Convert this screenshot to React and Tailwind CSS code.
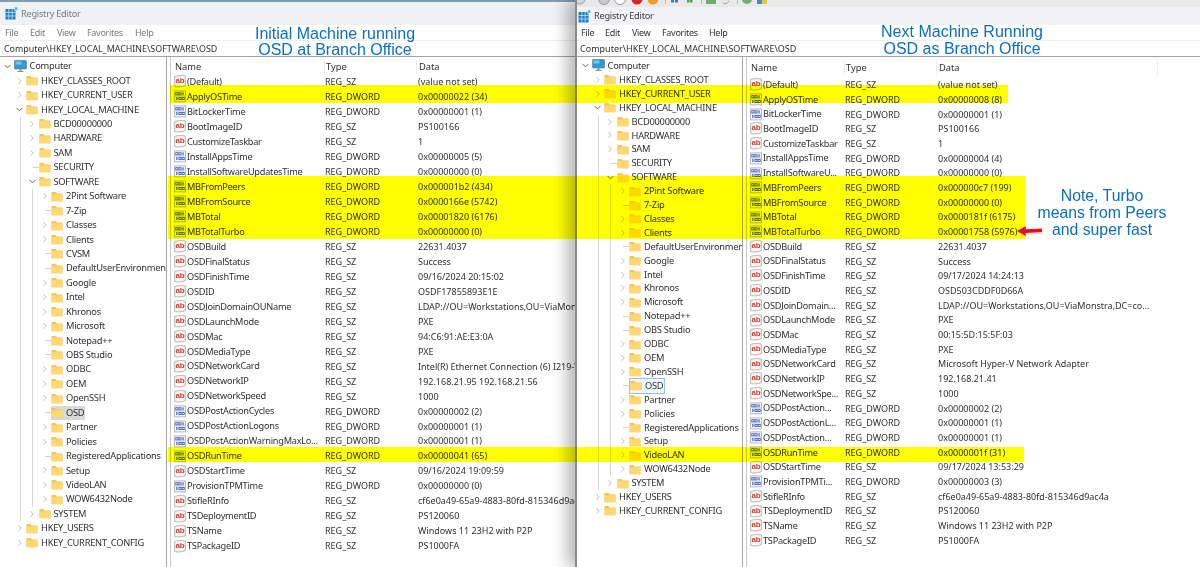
import React from "react";
import { ChevronRight, ChevronDown } from "lucide-react";

const tree = (second) => {
  const soft = [
    ["2Pint Software", 1], ["7-Zip", 0], ["Classes", 1], ["Clients", 1],
    ...(second ? [] : [["CVSM", 0]]),
    ["DefaultUserEnvironment", 0], ["Google", 1], ["Intel", 1], ["Khronos", 1], ["Microsoft", 1],
    ["Notepad++", 0], ["OBS Studio", 0], ["ODBC", 1], ["OEM", 1], ["OpenSSH", 1], ["OSD", 0, "sel"],
    ["Partner", 1], ["Policies", 1], ["RegisteredApplications", 0], ["Setup", 1], ["VideoLAN", 1], ["WOW6432Node", 1],
  ];
  return soft;
};

const left = [
  ["s","(Default)","REG_SZ","(value not set)"],["d","ApplyOSTime","REG_DWORD","0x00000022 (34)"],["d","BitLockerTime","REG_DWORD","0x00000001 (1)"],["s","BootImageID","REG_SZ","PS100166"],["s","CustomizeTaskbar","REG_SZ","1"],["d","InstallAppsTime","REG_DWORD","0x00000005 (5)"],["d","InstallSoftwareUpdatesTime","REG_DWORD","0x00000000 (0)"],["d","MBFromPeers","REG_DWORD","0x000001b2 (434)"],["d","MBFromSource","REG_DWORD","0x0000166e (5742)"],["d","MBTotal","REG_DWORD","0x00001820 (6176)"],["d","MBTotalTurbo","REG_DWORD","0x00000000 (0)"],["s","OSDBuild","REG_SZ","22631.4037"],["s","OSDFinalStatus","REG_SZ","Success"],["s","OSDFinishTime","REG_SZ","09/16/2024 20:15:02"],["s","OSDID","REG_SZ","OSDF17855893E1E"],["s","OSDJoinDomainOUName","REG_SZ","LDAP://OU=Workstations,OU=ViaMonstra,DC=corp"],["s","OSDLaunchMode","REG_SZ","PXE"],["s","OSDMac","REG_SZ","94:C6:91:AE:E3:0A"],["s","OSDMediaType","REG_SZ","PXE"],["s","OSDNetworkCard","REG_SZ","Intel(R) Ethernet Connection (6) I219-V"],["s","OSDNetworkIP","REG_SZ","192.168.21.95 192.168.21.56"],["s","OSDNetworkSpeed","REG_SZ","1000"],["d","OSDPostActionCycles","REG_DWORD","0x00000002 (2)"],["d","OSDPostActionLogons","REG_DWORD","0x00000001 (1)"],["d","OSDPostActionWarningMaxLo...","REG_DWORD","0x00000001 (1)"],["d","OSDRunTime","REG_DWORD","0x00000041 (65)"],["s","OSDStartTime","REG_SZ","09/16/2024 19:09:59"],["d","ProvisionTPMTime","REG_DWORD","0x00000000 (0)"],["s","StifleRInfo","REG_SZ","cf6e0a49-65a9-4883-80fd-815346d9ac4a"],["s","TSDeploymentID","REG_SZ","PS120060"],["s","TSName","REG_SZ","Windows 11 23H2 with P2P"],["s","TSPackageID","REG_SZ","PS1000FA"],
];
const right = [
  ["s","(Default)","REG_SZ","(value not set)"],["d","ApplyOSTime","REG_DWORD","0x00000008 (8)"],["d","BitLockerTime","REG_DWORD","0x00000001 (1)"],["s","BootImageID","REG_SZ","PS100166"],["s","CustomizeTaskbar","REG_SZ","1"],["d","InstallAppsTime","REG_DWORD","0x00000004 (4)"],["d","InstallSoftwareU...","REG_DWORD","0x00000000 (0)"],["d","MBFromPeers","REG_DWORD","0x000000c7 (199)"],["d","MBFromSource","REG_DWORD","0x00000000 (0)"],["d","MBTotal","REG_DWORD","0x0000181f (6175)"],["d","MBTotalTurbo","REG_DWORD","0x00001758 (5976)"],["s","OSDBuild","REG_SZ","22631.4037"],["s","OSDFinalStatus","REG_SZ","Success"],["s","OSDFinishTime","REG_SZ","09/17/2024 14:24:13"],["s","OSDID","REG_SZ","OSD503CDDF0D66A"],["s","OSDJoinDomain...","REG_SZ","LDAP://OU=Workstations,OU=ViaMonstra,DC=co..."],["s","OSDLaunchMode","REG_SZ","PXE"],["s","OSDMac","REG_SZ","00:15:5D:15:5F:03"],["s","OSDMediaType","REG_SZ","PXE"],["s","OSDNetworkCard","REG_SZ","Microsoft Hyper-V Network Adapter"],["s","OSDNetworkIP","REG_SZ","192.168.21.41"],["s","OSDNetworkSpe...","REG_SZ","1000"],["d","OSDPostAction...","REG_DWORD","0x00000002 (2)"],["d","OSDPostActionL...","REG_DWORD","0x00000001 (1)"],["d","OSDPostAction...","REG_DWORD","0x00000001 (1)"],["d","OSDRunTime","REG_DWORD","0x0000001f (31)"],["s","OSDStartTime","REG_SZ","09/17/2024 13:53:29"],["d","ProvisionTPMTi...","REG_DWORD","0x00000003 (3)"],["s","StifleRInfo","REG_SZ","cf6e0a49-65a9-4883-80fd-815346d9ac4a"],["s","TSDeploymentID","REG_SZ","PS120060"],["s","TSName","REG_SZ","Windows 11 23H2 with P2P"],["s","TSPackageID","REG_SZ","PS1000FA"],
];

const Folder = () => (
  <svg width="12" height="11" viewBox="0 0 12 11" className="shrink-0">
    <path d="M0.5 1h4l1.3 1.4h5.7v7.8h-11z" fill="#f6c453" />
    <path d="M0.5 3.2h11v7h-11z" fill="#ffd873" />
  </svg>
);

const Monitor = () => (
  <svg width="13" height="13" viewBox="0 0 13 13" className="shrink-0">
    <rect x="0.5" y="0.5" width="12" height="8.5" rx="0.5" fill="#2f9ad6" stroke="#4f7f99" strokeWidth="0.6" />
    <rect x="1.5" y="1.5" width="6" height="3" fill="#6cc6ee" />
    <rect x="5.5" y="9" width="2" height="2" fill="#7f98a8" />
    <rect x="3.5" y="11" width="6" height="1" fill="#a9885f" />
  </svg>
);

const Regedit = () => (
  <svg width="13" height="13" viewBox="0 0 13 13" className="shrink-0">
    <rect x="0.5" y="2" width="10" height="10.5" fill="#1f7fc4" />
    <path d="M3.8 2v10.5M7.2 2v10.5M0.5 5.5h10M0.5 9h10" stroke="#d8eefa" strokeWidth="0.7" />
    <rect x="9.5" y="0" width="3.2" height="3.2" fill="#5bb6e8" stroke="#ffffff" strokeWidth="0.4" />
  </svg>
);

const StrIcon = () => (
  <svg width="12" height="13" viewBox="0 0 12 13" className="shrink-0">
    <path d="M0.7 1.5c3-1.2 7-1 10.6-0.6v9.8c-3 1-7.5 1.8-10.6 0.8z" fill="#fbf7f5" stroke="#a9a3a3" strokeWidth="0.8" />
    <text x="6" y="8" textAnchor="middle" fontSize="8" fontWeight="700" fill="#d23f2f" fontFamily="Liberation Sans, sans-serif">ab</text>
  </svg>
);

const Bit = ({ x, y, one }) =>
  one ? (
    <rect x={x + 0.9} y={y} width="1.1" height="3" fill="#3559b8" />
  ) : (
    <rect x={x + 0.4} y={y + 0.4} width="2.2" height="2.2" fill="none" stroke="#3559b8" strokeWidth="0.8" />
  );

const DwordIcon = () => (
  <svg width="12" height="13" viewBox="0 0 12 13" className="shrink-0">
    <rect x="0.6" y="0.9" width="10.8" height="11" fill="#f5f6fb" stroke="#a5a8b4" strokeWidth="0.8" />
    <Bit x={1.4} y={2.3} />
    <Bit x={4.5} y={2.3} />
    <Bit x={7.6} y={2.3} one />
    <Bit x={1.4} y={7} one />
    <Bit x={4.5} y={7} />
    <Bit x={7.6} y={7} />
    <path d="M1.4 6h9.2" stroke="#8fa0d8" strokeWidth="0.5" />
  </svg>
);

function TreeRow({ label, chev, rowClass, icon, selClass }) {
  return (
    <div className={`flex items-center whitespace-nowrap ${rowClass}`}>
      <div className="flex w-[12.5px] shrink-0 items-center justify-end">
        {chev === "r" && <ChevronRight size={10} strokeWidth={1.4} className="mr-[1.5px] text-[#8a8a8a]" />}
        {chev === "d" && <ChevronDown size={11} strokeWidth={1.8} className="mr-[1px] text-[#444444]" />}
        {!chev && <div className="h-px w-[6px] bg-[#d2d2d2]" />}
      </div>
      <div className={`flex items-center gap-[3px] ${selClass || ""}`}>
        {icon || <Folder />}
        <span>{label}</span>
      </div>
    </div>
  );
}

function Tree({ second, rowClass, selClass, widthClass }) {
  return (
    <div className={`shrink-0 overflow-hidden text-[9.3px] tracking-[-0.25px] ${widthClass}`}>
      <TreeRow label="Computer" chev="d" rowClass={rowClass} icon={<Monitor />} />
      <div className="ml-[12.5px]">
        <TreeRow label="HKEY_CLASSES_ROOT" chev="r" rowClass={rowClass} />
        <TreeRow label="HKEY_CURRENT_USER" chev="r" rowClass={rowClass} />
        <TreeRow label="HKEY_LOCAL_MACHINE" chev="d" rowClass={rowClass} />
        <div className="ml-[6px] border-l border-[#d8d8d8] pl-[5.5px]">
          <TreeRow label="BCD00000000" chev="r" rowClass={rowClass} />
          <TreeRow label="HARDWARE" chev="r" rowClass={rowClass} />
          <TreeRow label="SAM" chev="r" rowClass={rowClass} />
          <TreeRow label="SECURITY" rowClass={rowClass} />
          <TreeRow label="SOFTWARE" chev="d" rowClass={rowClass} />
          <div className="ml-[6px] border-l border-[#d8d8d8] pl-[5.5px]">
            {tree(second).map(([l, c, s]) => (
              <TreeRow key={l} label={l} chev={c ? "r" : null} rowClass={rowClass} selClass={s ? selClass : ""} />
            ))}
          </div>
          <TreeRow label="SYSTEM" chev="r" rowClass={rowClass} />
        </div>
        <TreeRow label="HKEY_USERS" chev="r" rowClass={rowClass} />
        <TreeRow label="HKEY_CURRENT_CONFIG" chev="r" rowClass={rowClass} />
      </div>
    </div>
  );
}

function ValueList({ rows, rowClass, headClass, nameClass, typeClass, dataClass }) {
  return (
    <div className="min-w-0 flex-1 overflow-hidden whitespace-nowrap">
      <div className={`flex items-center text-[9.3px] ${headClass}`}>
        <div className={`${nameClass} shrink-0 pl-[1px]`}>Name</div>
        <div className={`${typeClass} shrink-0 border-l border-[#eeeeee] pl-[1px]`}>Type</div>
        <div className={`${dataClass} shrink-0 border-l border-[#eeeeee] pl-[2px]`}>Data</div>
      </div>
      {rows.map((r) => (
        <div key={r[1] + r[3]} className={`flex items-center ${rowClass}`}>
          <div className={`${nameClass} flex shrink-0 items-center gap-[1px] text-[9.2px] tracking-[-0.25px]`}>
            {r[0] === "s" ? <StrIcon /> : <DwordIcon />}
            <span>{r[1]}</span>
          </div>
          <div className={`${typeClass} shrink-0 pl-[1px] text-[9px]`}>{r[2]}</div>
          <div className="shrink-0 pl-[2px] text-[9px]">{r[3]}</div>
        </div>
      ))}
    </div>
  );
}

const Strip = () => (
  <svg width="200" height="7" viewBox="0 0 200 7" className="block shrink-0">
    <circle cx="3" cy="-1" r="5" fill="#d4d8dc" stroke="#9aa0a6" />
    <circle cx="27" cy="-1" r="5.5" fill="#c8c8c8" stroke="#9a9a9a" />
    <circle cx="43" cy="-1" r="5.5" fill="#ffffff" stroke="#9a9a9a" />
    <circle cx="60" cy="-1" r="5.5" fill="#d9252b" />
    <circle cx="76" cy="-1" r="5.5" fill="#f09a2a" />
    <rect x="88" y="0" width="1" height="4" fill="#bbbbbb" />
    <rect x="94" y="0" width="3" height="2.5" fill="#2f7fc4" />
    <rect x="98" y="0" width="3" height="2.5" fill="#2f7fc4" />
    <rect x="110" y="0" width="2.5" height="2.5" fill="#4aa64a" />
    <rect x="113" y="0" width="2.5" height="2.5" fill="#4aa64a" />
    <rect x="124" y="0" width="1" height="4" fill="#bbbbbb" />
    <rect x="129" y="0" width="10" height="4" fill="#6fae6f" />
    <path d="M146 3c2 1 4 1 6-2" stroke="#9a9a9a" fill="none" />
    <rect x="160" y="0" width="1" height="4" fill="#bbbbbb" />
    <circle cx="170" cy="-1" r="5" fill="#6fae6f" />
    <rect x="180" y="0" width="5" height="4" fill="#3b8fd0" />
    <rect x="185" y="0" width="5" height="4" fill="#e8c64a" />
  </svg>
);

export default function App() {
  return (
    <div className="relative flex h-[567px] w-[1200px] overflow-hidden bg-white text-[#303030] blur-[0.3px] [font-family:'Noto_Sans',sans-serif]">
      {/* Left window */}
      <section className="flex w-[575px] shrink-0 flex-col overflow-hidden border-t-2 border-[#7d9db3]">
        <div className="flex h-[23px] shrink-0 items-center gap-[3px] bg-[#eff1f2] pl-[5px] text-[9.2px] tracking-[-0.25px] text-[#7a7a7a]">
          <Regedit />
          <span>Registry Editor</span>
        </div>
        <div className="flex h-[15px] shrink-0 items-center bg-white text-[9px] tracking-[-0.3px] text-[#7a7a7a]">
          <span className="ml-[5px] w-[25px]">File</span>
          <span className="w-[27px]">Edit</span>
          <span className="w-[30px]">View</span>
          <span className="w-[48px]">Favorites</span>
          <span>Help</span>
        </div>
        <div className="flex h-[16px] shrink-0 items-center border-t border-[#efefef] pl-[4px] text-[8.9px]">Computer\HKEY_LOCAL_MACHINE\SOFTWARE\OSD</div>
        <div className="flex min-h-0 flex-1 border-t border-[#a3a3a3]">
          <Tree rowClass="h-[14.45px]" widthClass="w-[167px] border-r border-[#a8a8a8] pl-[1px] pt-[2px]" selClass="bg-[#d9d9d9] pr-[1px]" />
          <div className="ml-[3px] flex min-w-0 flex-1 border-l border-[#c8c8c8] pl-[3px]">
            <ValueList rows={left} rowClass="h-[14.97px]" headClass="h-[17.5px] pt-[2px]" nameClass="w-[150px]" typeClass="w-[92px]" dataClass="w-[200px]" />
          </div>
        </div>
      </section>

      {/* Right window */}
      <section className="relative z-10 flex min-w-0 flex-1 flex-col overflow-hidden border-l-2 border-[#8a8a8a] shadow-[-8px_0_14px_rgba(0,0,0,0.28)]">
        <div className="h-[7px] shrink-0 bg-[#e9e9e9]">
          <Strip />
        </div>
        <div className="flex h-[18px] shrink-0 items-center gap-[3px] bg-[#f1f2f3] pl-[1px] text-[9.2px] tracking-[-0.25px] text-[#404040]">
          <Regedit />
          <span>Registry Editor</span>
        </div>
        <div className="flex h-[15px] shrink-0 items-center bg-white text-[9px] tracking-[-0.3px] text-[#303030]">
          <span className="ml-[4px] w-[24px]">File</span>
          <span className="w-[27px]">Edit</span>
          <span className="w-[30px]">View</span>
          <span className="w-[47px]">Favorites</span>
          <span>Help</span>
        </div>
        <div className="flex h-[16px] shrink-0 items-center border-t border-[#efefef] pl-[3px] text-[9px]">Computer\HKEY_LOCAL_MACHINE\SOFTWARE\OSD</div>
        <div className="flex min-h-0 flex-1 border-t border-[#a3a3a3]">
          <Tree second rowClass="h-[13.92px]" widthClass="w-[166px] border-r border-[#a8a8a8] pl-[2px] pt-[2px]" selClass="border border-[#8cc4ec] bg-[#eef7fe] pr-[1px]" />
          <div className="ml-[3px] flex min-w-0 flex-1 border-l border-[#c8c8c8] pl-[3px]">
            <ValueList rows={right} rowClass="h-[14.71px]" headClass="h-[20.5px] pt-[1px]" nameClass="w-[94px]" typeClass="w-[92px]" dataClass="w-[222px] border-r" />
          </div>
        </div>
      </section>

      {/* Highlighter marks */}
      <div className="pointer-events-none absolute left-[170px] top-[85px] z-20 h-[18px] w-[838px] bg-[#ffff00] mix-blend-multiply" />
      <div className="pointer-events-none absolute left-[168px] top-[176px] z-20 h-[63px] w-[857px] bg-[#ffff00] mix-blend-multiply" />
      <div className="pointer-events-none absolute left-[168px] top-[447px] z-20 h-[15px] w-[856px] bg-[#ffff00] mix-blend-multiply" />

      {/* Annotations */}
      <div className="absolute left-[225px] top-[26px] z-30 w-[220px] text-center text-[16px] leading-[16px] text-[#0a6fc2] [font-family:'Liberation_Sans',sans-serif]">
        <div>Initial Machine running</div>
        <div>OSD at Branch Office</div>
      </div>
      <div className="absolute left-[852px] top-[23px] z-30 w-[220px] text-center text-[16px] leading-[17px] text-[#0a6fc2] [font-family:'Liberation_Sans',sans-serif]">
        <div>Next Machine Running</div>
        <div>OSD as Branch Office</div>
      </div>
      <div className="absolute left-[1022px] top-[187px] z-30 w-[160px] text-center text-[15.8px] leading-[17px] text-[#0a6fc2] [font-family:'Liberation_Sans',sans-serif]">
        <div>Note, Turbo</div>
        <div>means from Peers</div>
        <div>and super fast</div>
      </div>
      <svg width="28" height="12" viewBox="0 0 28 12" className="absolute left-[1016px] top-[225px] z-30">
        <path d="M1 6.5 10 1.5 9.5 4.8 26 4 26 8 9.5 8.5 10 11.5z" fill="#8f8f8f" opacity="0.35" transform="translate(0.5 1)" />
        <path d="M1 6 10 1 9.5 4.3 26 3.5 26 7 9.5 8 10 11z" fill="#e3101f" />
      </svg>
    </div>
  );
}
